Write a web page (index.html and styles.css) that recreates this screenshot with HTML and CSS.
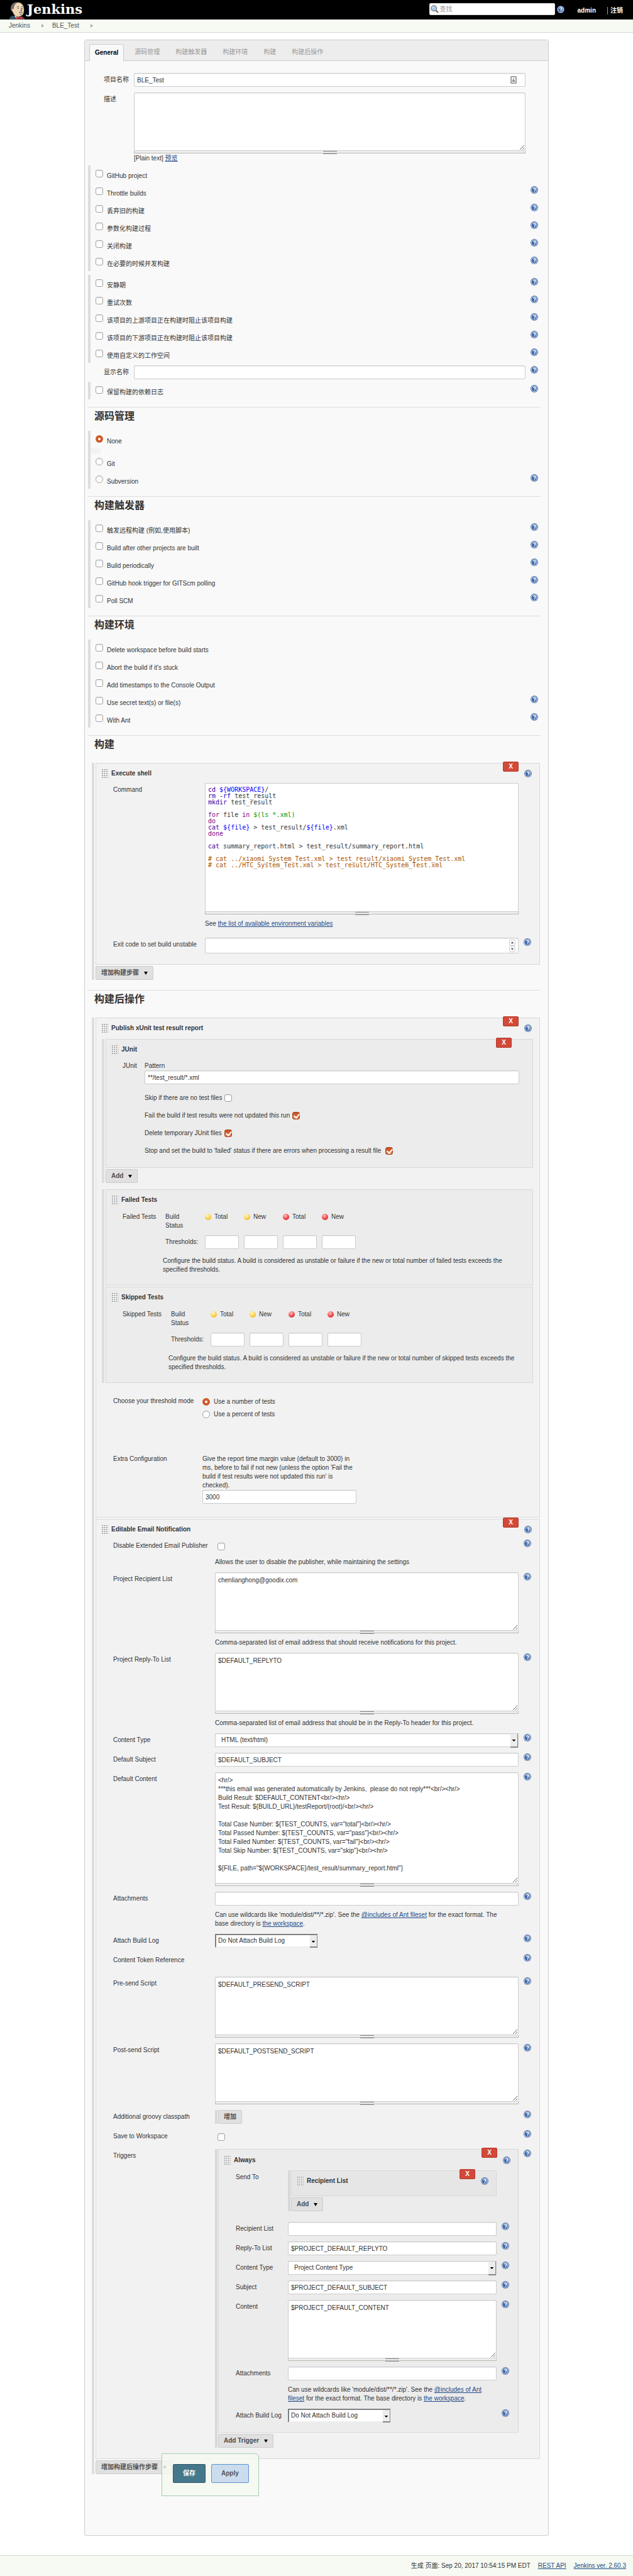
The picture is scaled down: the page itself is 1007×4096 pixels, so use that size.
FILE: index.html
```html
<!DOCTYPE html>
<html lang="zh-CN">
<head>
<meta charset="utf-8">
<title>BLE_Test Config [Jenkins]</title>
<link rel="stylesheet" href="styles.css">
</head>
<body>
<svg class="sprite" aria-hidden="true">
  <symbol id="help" viewBox="0 0 16 16">
    <circle cx="8" cy="8" r="7.9" fill="#3a5f9e"/>
    <circle cx="8" cy="8" r="6.9" fill="#f4f7fb"/>
    <circle cx="8" cy="8" r="5.9" fill="#3c65a6"/>
    <path d="M8 2.1a5.9 5.9 0 0 1 3.5 10.6L8 8z" fill="#6f93c6"/>
    <path d="M5.8 6.4c0-1.5 1-2.3 2.3-2.3s2.3.8 2.3 2c0 1.5-2 1.700-2 3.200" fill="none" stroke="#fff" stroke-width="1.700"/>
    <rect x="7.400" y="10.300" width="1.900" height="1.800" fill="#fff"/>
  </symbol>
</svg>

<header class="header">
  <a class="logo" href="#">
    <svg width="26" height="28" viewBox="0 0 100 108" aria-hidden="true">
      <path d="M2 108 Q4 88 30 84 L72 88 Q96 92 98 108Z" fill="#335061"/>
      <path d="M14 30 Q22 2 54 2 Q90 4 93 42 Q96 70 82 82 Q66 96 46 88 Q28 82 24 62 Q10 56 14 30Z" fill="#f0d6b7" stroke="#222" stroke-width="2"/>
      <path d="M12 44 Q10 20 28 9 Q44 0 58 4 Q36 10 32 30 L30 46 Q26 38 20 44 L22 58 Q12 54 12 44Z" fill="#6d6b6d"/>
      <path d="M36 84 L48 108 L62 92Z" fill="#fff"/>
      <path d="M46 90 L64 95 L84 90 L84 108 L66 104 L48 108Z" fill="#d33833" stroke="#7a1512" stroke-width="2"/>
      <path d="M50 32q6-6 12-2M76 30q5-4 9 1M74 40q8 10 4 15l-8-1M62 66q8-6 12-1 7-4 12 1M66 75q8 4 14-1" fill="none" stroke="#222" stroke-width="3"/>
      <circle cx="57" cy="40" r="3" fill="#222"/><circle cx="81" cy="40" r="3" fill="#222"/>
    </svg>
    <span class="logo-name">Jenkins</span>
  </a>
  <form class="search">
    <svg width="13" height="13" viewBox="0 0 16 16" aria-hidden="true">
      <path d="M10.500 10.500l4.300 4.300" stroke="#666" stroke-width="2.600"/>
      <circle cx="6.500" cy="6.500" r="5.300" fill="#a9c8ea" stroke="#777" stroke-width="1.500"/>
      <path d="M3.500 6a3 3 0 0 1 3-3" stroke="#fff" fill="none"/>
    </svg>
    <input type="search" placeholder="查找" aria-label="查找">
  </form>
  <a class="help" href="#" aria-label="Help"><svg><use href="#help"/></svg></a>
  <a class="user" href="#">admin</a>
  <a class="logout" href="#">注销</a>
</header>
<nav class="crumbs">
  <a href="#">Jenkins</a><i></i><a href="#">BLE_Test</a><i></i>
</nav>

<main class="config">
  <nav class="tabs">
    <a class="active" href="#general">General</a>
    <a href="#scm">源码管理</a>
    <a href="#triggers">构建触发器</a>
    <a href="#env">构建环境</a>
    <a href="#build">构建</a>
    <a href="#post">构建后操作</a>
  </nav>
  <form class="body">
    <div class="field" id="general">
      <label for="name">项目名称</label>
      <div class="control with-icon">
        <input type="text" id="name" value="BLE_Test">
        <svg width="10" height="12" viewBox="0 0 12 15" aria-hidden="true"><rect x="1" y="1" width="10" height="13" rx="1" fill="#fff" stroke="#888" stroke-width="2"/><path d="M6 3.500v4M3.500 8.500h5M3.500 10.500h5" stroke="#777" stroke-width="1.500"/></svg>
      </div>
    </div>
    <div class="field">
      <label for="desc">描述</label>
      <div class="control"><textarea id="desc"></textarea><div class="handle"></div><div class="note">[Plain text] <a href="#">预览</a></div></div>
    </div>

    <div class="group first">
      <div class="opt"><input type="checkbox" id="g1"><label for="g1">GitHub project</label></div>
      <div class="opt"><input type="checkbox" id="g2"><label for="g2">Throttle builds</label><a class="help" href="#" aria-label="Help"><svg><use href="#help"/></svg></a></div>
      <div class="opt"><input type="checkbox" id="g3"><label for="g3">丢弃旧的构建</label><a class="help" href="#" aria-label="Help"><svg><use href="#help"/></svg></a></div>
      <div class="opt"><input type="checkbox" id="g4"><label for="g4">参数化构建过程</label><a class="help" href="#" aria-label="Help"><svg><use href="#help"/></svg></a></div>
      <div class="opt"><input type="checkbox" id="g5"><label for="g5">关闭构建</label><a class="help" href="#" aria-label="Help"><svg><use href="#help"/></svg></a></div>
      <div class="opt"><input type="checkbox" id="g6"><label for="g6">在必要的时候并发构建</label><a class="help" href="#" aria-label="Help"><svg><use href="#help"/></svg></a></div>
    </div>
    <div class="group advanced">
      <div class="opt"><input type="checkbox" id="a1"><label for="a1">安静期</label><a class="help" href="#" aria-label="Help"><svg><use href="#help"/></svg></a></div>
      <div class="opt"><input type="checkbox" id="a2"><label for="a2">重试次数</label><a class="help" href="#" aria-label="Help"><svg><use href="#help"/></svg></a></div>
      <div class="opt"><input type="checkbox" id="a3"><label for="a3">该项目的上游项目正在构建时阻止该项目构建</label><a class="help" href="#" aria-label="Help"><svg><use href="#help"/></svg></a></div>
      <div class="opt"><input type="checkbox" id="a4"><label for="a4">该项目的下游项目正在构建时阻止该项目构建</label><a class="help" href="#" aria-label="Help"><svg><use href="#help"/></svg></a></div>
      <div class="opt"><input type="checkbox" id="a5"><label for="a5">使用自定义的工作空间</label><a class="help" href="#" aria-label="Help"><svg><use href="#help"/></svg></a></div>
    </div>
    <div class="field tight">
      <label for="display">显示名称</label>
      <div class="control"><input type="text" id="display"></div>
      <a class="help" href="#" aria-label="Help"><svg><use href="#help"/></svg></a>
    </div>
    <div class="group">
      <div class="opt"><input type="checkbox" id="k1"><label for="k1">保留构建的依赖日志</label><a class="help" href="#" aria-label="Help"><svg><use href="#help"/></svg></a></div>
    </div>

    <section id="scm">
      <h2>源码管理</h2>
      <div class="group">
        <div class="opt"><input type="radio" name="scm" id="s1" checked><label for="s1">None</label></div>
        <div class="opt-gap"></div>
        <div class="opt"><input type="radio" name="scm" id="s2"><label for="s2">Git</label></div>
        <div class="opt"><input type="radio" name="scm" id="s3"><label for="s3">Subversion</label><a class="help" href="#" aria-label="Help"><svg><use href="#help"/></svg></a></div>
      </div>
    </section>

    <section id="triggers">
      <h2>构建触发器</h2>
      <div class="group">
        <div class="opt"><input type="checkbox" id="t1"><label for="t1">触发远程构建 (例如,使用脚本)</label><a class="help" href="#" aria-label="Help"><svg><use href="#help"/></svg></a></div>
        <div class="opt"><input type="checkbox" id="t2"><label for="t2">Build after other projects are built</label><a class="help" href="#" aria-label="Help"><svg><use href="#help"/></svg></a></div>
        <div class="opt"><input type="checkbox" id="t3"><label for="t3">Build periodically</label><a class="help" href="#" aria-label="Help"><svg><use href="#help"/></svg></a></div>
        <div class="opt"><input type="checkbox" id="t4"><label for="t4">GitHub hook trigger for GITScm polling</label><a class="help" href="#" aria-label="Help"><svg><use href="#help"/></svg></a></div>
        <div class="opt"><input type="checkbox" id="t5"><label for="t5">Poll SCM</label><a class="help" href="#" aria-label="Help"><svg><use href="#help"/></svg></a></div>
      </div>
    </section>

    <section id="env">
      <h2>构建环境</h2>
      <div class="group">
        <div class="opt"><input type="checkbox" id="e1"><label for="e1">Delete workspace before build starts</label></div>
        <div class="opt"><input type="checkbox" id="e2"><label for="e2">Abort the build if it's stuck</label></div>
        <div class="opt"><input type="checkbox" id="e3"><label for="e3">Add timestamps to the Console Output</label></div>
        <div class="opt"><input type="checkbox" id="e4"><label for="e4">Use secret text(s) or file(s)</label><a class="help" href="#" aria-label="Help"><svg><use href="#help"/></svg></a></div>
        <div class="opt"><input type="checkbox" id="e5"><label for="e5">With Ant</label><a class="help" href="#" aria-label="Help"><svg><use href="#help"/></svg></a></div>
      </div>
    </section>

    <section id="build">
      <h2>构建</h2>
      <div class="repeat top">
        <div class="block build">
          <button type="button" class="delete">X</button>
          <div class="head"><span class="grip"></span><h3>Execute shell</h3><a class="help" href="#" aria-label="Help"><svg><use href="#help"/></svg></a></div>
          <div class="field">
            <span class="label" id="cmd">Command</span>
            <div class="control">
<pre class="code" role="textbox" aria-labelledby="cmd" tabindex="0"><b class="cmd">cd</b> <b class="var">${WORKSPACE}</b>/
<b class="cmd">rm</b> <b class="attr">-rf</b> test_result
<b class="cmd">mkdir</b> test_result

<b class="key">for</b> file <b class="key">in</b> <b class="sub">$(ls *.xml)</b>
<b class="key">do</b>
<b class="cmd">cat</b> <b class="var">${file}</b> &gt; test_result/<b class="var">${file}</b>.xml
<b class="key">done</b>

<b class="cmd">cat</b> summary_report.html &gt; test_result/summary_report.html

<b class="com"># cat ../xiaomi_System_Test.xml &gt; test_result/xiaomi_System_Test.xml</b>
<b class="com"># cat ../HTC_System_Test.xml &gt; test_result/HTC_System_Test.xml</b></pre>
              <div class="handle"></div>
              <p class="desc">See <a href="#">the list of available environment variables</a></p>
            </div>
          </div>
          <div class="field exit">
            <label for="exit">Exit code to set build unstable</label>
            <div class="control with-icon">
              <input type="text" id="exit" inputmode="numeric">
              <svg width="10" height="20" viewBox="0 0 10 20" aria-hidden="true"><rect x=".5" y=".5" width="9" height="9" rx="2" fill="#fafafa" stroke="#ccc"/><rect x=".5" y="10.500" width="9" height="9" rx="2" fill="#fafafa" stroke="#ccc"/><path d="M3 6l2-2.500L7 6zM3 14l2 2.500L7 14z" fill="#333"/></svg>
            </div>
            <a class="help" href="#" aria-label="Help"><svg><use href="#help"/></svg></a>
          </div>
        </div>
        <button type="button" class="btn menu">增加构建步骤</button>
      </div>
    </section>

    <section id="post" class="after-blocks">
      <h2>构建后操作</h2>
      <div class="repeat top">
        <div class="block xunit">
          <button type="button" class="delete">X</button>
          <div class="head"><span class="grip"></span><h3>Publish xUnit test result report</h3><a class="help" href="#" aria-label="Help"><svg><use href="#help"/></svg></a></div>
          <div class="repeat inner">
            <div class="block junit">
              <button type="button" class="delete">X</button>
              <div class="head"><span class="grip"></span><h3>JUnit</h3></div>
              <div class="junit-body">
                <span>JUnit</span>
                <div>
                  <label for="pattern">Pattern</label>
                  <input type="text" id="pattern" value="**/test_result/*.xml">
                  <div class="check"><label for="j1">Skip if there are no test files</label><input type="checkbox" id="j1"></div>
                  <div class="check"><label for="j2">Fail the build if test results were not updated this run</label><input type="checkbox" id="j2" checked></div>
                  <div class="check"><label for="j3">Delete temporary JUnit files</label><input type="checkbox" id="j3" checked></div>
                  <div class="check wide"><label for="j4">Stop and set the build to 'failed' status if there are errors when processing a result file</label><input type="checkbox" id="j4" checked></div>
                </div>
              </div>
            </div>
            <button type="button" class="btn menu">Add</button>
          </div>
          <div class="repeat inner">
            <div class="block">
              <div class="head"><span class="grip"></span><h3>Failed Tests</h3></div>
              <div class="limits">
                <span>Failed Tests</span><span class="narrow">Build Status</span>
                <span class="ball yellow">Total</span><span class="ball yellow">New</span><span class="ball red">Total</span><span class="ball red">New</span>
                <span></span><span class="mid">Thresholds:</span>
                <input type="text" aria-label="Unstable total"><input type="text" aria-label="Unstable new"><input type="text" aria-label="Failed total"><input type="text" aria-label="Failed new">
                <p>Configure the build status. A build is considered as unstable or failure if the new or total number of failed tests exceeds the specified thresholds.</p>
              </div>
            </div>
            <div class="block">
              <div class="head"><span class="grip"></span><h3>Skipped Tests</h3></div>
              <div class="limits skipped">
                <span>Skipped Tests</span><span class="narrow">Build Status</span>
                <span class="ball yellow">Total</span><span class="ball yellow">New</span><span class="ball red">Total</span><span class="ball red">New</span>
                <span></span><span class="mid">Thresholds:</span>
                <input type="text" aria-label="Unstable total"><input type="text" aria-label="Unstable new"><input type="text" aria-label="Failed total"><input type="text" aria-label="Failed new">
                <p>Configure the build status. A build is considered as unstable or failure if the new or total number of skipped tests exceeds the specified thresholds.</p>
              </div>
            </div>
          </div>
          <div class="field mode">
            <span class="label">Choose your threshold mode</span>
            <div class="control radios">
              <div><input type="radio" name="mode" id="m1" checked><label for="m1">Use a number of tests</label></div>
              <div><input type="radio" name="mode" id="m2"><label for="m2">Use a percent of tests</label></div>
            </div>
          </div>
          <div class="field">
            <span class="label">Extra Configuration</span>
            <div class="control margin-value">
              <label for="margin">Give the report time margin value (default to 3000) in ms, before to fail if not new (unless the option 'Fail the build if test results were not updated this run' is checked).</label>
              <input type="text" id="margin" value="3000">
            </div>
          </div>
        </div>

        <div class="block email">
          <button type="button" class="delete">X</button>
          <div class="head"><span class="grip"></span><h3>Editable Email Notification</h3><a class="help" href="#" aria-label="Help"><svg><use href="#help"/></svg></a></div>
          <div class="field">
            <label for="m-dis">Disable Extended Email Publisher</label>
            <div class="control"><div class="tick"><input type="checkbox" id="m-dis"></div><p class="desc">Allows the user to disable the publisher, while maintaining the settings</p></div>
            <a class="help" href="#" aria-label="Help"><svg><use href="#help"/></svg></a>
          </div>
          <div class="field">
            <label for="m-rec">Project Recipient List</label>
            <div class="control"><textarea id="m-rec">chenlianghong@goodix.com</textarea><div class="handle"></div><p class="desc">Comma-separated list of email address that should receive notifications for this project.</p></div>
            <a class="help" href="#" aria-label="Help"><svg><use href="#help"/></svg></a>
          </div>
          <div class="field">
            <label for="m-rep">Project Reply-To List</label>
            <div class="control"><textarea id="m-rep">$DEFAULT_REPLYTO</textarea><div class="handle"></div><p class="desc">Comma-separated list of email address that should be in the Reply-To header for this project.</p></div>
            <a class="help" href="#" aria-label="Help"><svg><use href="#help"/></svg></a>
          </div>
          <div class="field">
            <label for="m-type">Content Type</label>
            <div class="control"><div class="select"><select id="m-type"><option>HTML (text/html)</option></select></div></div>
            <a class="help" href="#" aria-label="Help"><svg><use href="#help"/></svg></a>
          </div>
          <div class="field">
            <label for="m-sub">Default Subject</label>
            <div class="control"><input type="text" id="m-sub" value="$DEFAULT_SUBJECT"></div>
            <a class="help" href="#" aria-label="Help"><svg><use href="#help"/></svg></a>
          </div>
          <div class="field">
            <label for="m-con">Default Content</label>
            <div class="control"><textarea id="m-con" class="tall">&lt;hr/&gt;
***this email was generated automatically by Jenkins,  please do not reply***&lt;br/&gt;&lt;hr/&gt;
Build Result: $DEFAULT_CONTENT&lt;br/&gt;&lt;hr/&gt;
Test Result: ${BUILD_URL}/testReport/(root)/&lt;br/&gt;&lt;hr/&gt;

Total Case Number: ${TEST_COUNTS, var="total"}&lt;br/&gt;&lt;hr/&gt;
Total Passed Number: ${TEST_COUNTS, var="pass"}&lt;br/&gt;&lt;hr/&gt;
Total Failed Number: ${TEST_COUNTS, var="fail"}&lt;br/&gt;&lt;hr/&gt;
Total Skip Number: ${TEST_COUNTS, var="skip"}&lt;br/&gt;&lt;hr/&gt;

${FILE, path="${WORKSPACE}/test_result/summary_report.html"}</textarea><div class="handle"></div></div>
            <a class="help" href="#" aria-label="Help"><svg><use href="#help"/></svg></a>
          </div>
          <div class="field">
            <label for="m-att">Attachments</label>
            <div class="control"><input type="text" id="m-att"><p class="desc">Can use wildcards like 'module/dist/**/*.zip'. See the <a href="#">@includes of Ant fileset</a> for the exact format. The base directory is <a href="#">the workspace</a>.</p></div>
            <a class="help" href="#" aria-label="Help"><svg><use href="#help"/></svg></a>
          </div>
          <div class="field">
            <label for="m-log">Attach Build Log</label>
            <div class="control"><div class="select inset"><select id="m-log"><option>Do Not Attach Build Log</option></select></div></div>
            <a class="help" href="#" aria-label="Help"><svg><use href="#help"/></svg></a>
          </div>
          <div class="field token">
            <span class="label">Content Token Reference</span>
            <div class="control"></div>
            <a class="help" href="#" aria-label="Help"><svg><use href="#help"/></svg></a>
          </div>
          <div class="field">
            <label for="m-pre">Pre-send Script</label>
            <div class="control"><textarea id="m-pre">$DEFAULT_PRESEND_SCRIPT</textarea><div class="handle"></div></div>
            <a class="help" href="#" aria-label="Help"><svg><use href="#help"/></svg></a>
          </div>
          <div class="field">
            <label for="m-post">Post-send Script</label>
            <div class="control"><textarea id="m-post">$DEFAULT_POSTSEND_SCRIPT</textarea><div class="handle"></div></div>
            <a class="help" href="#" aria-label="Help"><svg><use href="#help"/></svg></a>
          </div>
          <div class="field">
            <span class="label">Additional groovy classpath</span>
            <div class="control"><div class="repeat nested"><button type="button" class="btn">增加</button></div></div>
            <a class="help" href="#" aria-label="Help"><svg><use href="#help"/></svg></a>
          </div>
          <div class="field">
            <label for="m-save">Save to Workspace</label>
            <div class="control"><div class="tick"><input type="checkbox" id="m-save"></div></div>
            <a class="help" href="#" aria-label="Help"><svg><use href="#help"/></svg></a>
          </div>
          <div class="field">
            <span class="label">Triggers</span>
            <div class="control">
              <div class="repeat nested">
                <div class="block always">
                  <button type="button" class="delete">X</button>
                  <div class="head"><span class="grip"></span><h3>Always</h3><a class="help" href="#" aria-label="Help"><svg><use href="#help"/></svg></a></div>
                  <div class="field">
                    <span class="label">Send To</span>
                    <div class="control">
                      <div class="repeat nested">
                        <div class="block recipient">
                          <button type="button" class="delete">X</button>
                          <div class="head"><span class="grip"></span><h3>Recipient List</h3><a class="help" href="#" aria-label="Help"><svg><use href="#help"/></svg></a></div>
                        </div>
                        <button type="button" class="btn menu">Add</button>
                      </div>
                    </div>
                  </div>
                  <div class="field after-send">
                    <label for="r-rec">Recipient List</label>
                    <div class="control"><input type="text" id="r-rec"></div>
                    <a class="help" href="#" aria-label="Help"><svg><use href="#help"/></svg></a>
                  </div>
                  <div class="field">
                    <label for="r-rep">Reply-To List</label>
                    <div class="control"><input type="text" id="r-rep" value="$PROJECT_DEFAULT_REPLYTO"></div>
                    <a class="help" href="#" aria-label="Help"><svg><use href="#help"/></svg></a>
                  </div>
                  <div class="field">
                    <label for="r-type">Content Type</label>
                    <div class="control"><div class="select"><select id="r-type"><option>Project Content Type</option></select></div></div>
                    <a class="help" href="#" aria-label="Help"><svg><use href="#help"/></svg></a>
                  </div>
                  <div class="field">
                    <label for="r-sub">Subject</label>
                    <div class="control"><input type="text" id="r-sub" value="$PROJECT_DEFAULT_SUBJECT"></div>
                    <a class="help" href="#" aria-label="Help"><svg><use href="#help"/></svg></a>
                  </div>
                  <div class="field">
                    <label for="r-con">Content</label>
                    <div class="control"><textarea id="r-con">$PROJECT_DEFAULT_CONTENT</textarea><div class="handle"></div></div>
                    <a class="help" href="#" aria-label="Help"><svg><use href="#help"/></svg></a>
                  </div>
                  <div class="field">
                    <label for="r-att">Attachments</label>
                    <div class="control"><input type="text" id="r-att"><p class="desc">Can use wildcards like 'module/dist/**/*.zip'. See the <a href="#">@includes of Ant fileset</a> for the exact format. The base directory is <a href="#">the workspace</a>.</p></div>
                    <a class="help" href="#" aria-label="Help"><svg><use href="#help"/></svg></a>
                  </div>
                  <div class="field">
                    <label for="r-log">Attach Build Log</label>
                    <div class="control"><div class="select inset"><select id="r-log"><option>Do Not Attach Build Log</option></select></div></div>
                    <a class="help" href="#" aria-label="Help"><svg><use href="#help"/></svg></a>
                  </div>
                </div>
                <button type="button" class="btn menu">Add Trigger</button>
              </div>
            </div>
            <a class="help" href="#" aria-label="Help"><svg><use href="#help"/></svg></a>
          </div>
        </div>
        <button type="button" class="btn menu">增加构建后操作步骤</button>
      </div>
    </section>

    <div class="actions">
      <button type="submit" class="save">保存</button>
      <button type="button" class="apply">Apply</button>
    </div>
  </form>
</main>

<footer class="footer">
  <span>生成 页面: Sep 20, 2017 10:54:15 PM EDT</span>
  <a href="#">REST API</a>
  <a href="#">Jenkins ver. 2.60.3</a>
</footer>
</body>
</html>
```
FILE: styles.css
```css
* { box-sizing: border-box; }
body {
  margin: 0;
  min-height: 100vh;
  display: flex;
  flex-direction: column;
  background: #fff;
  color: #333;
  font: 10px/14px "Liberation Sans", "Noto Sans CJK SC", sans-serif;
}
a { color: #204a87; }
h2, h3, p, pre { margin: 0; }
button, input, select, textarea { font: inherit; color: inherit; }
.sprite { position: absolute; width: 0; height: 0; }
.help { display: block; flex: none; width: 12px; height: 12px; }
.help svg { display: block; width: 12px; height: 12px; }

/* page header */
.header {
  display: flex;
  align-items: flex-start;
  height: 31px;
  padding: 0 16px 0 14px;
  background: #000;
}
.header a { color: #fff; text-decoration: none; font-weight: bold; }
.logo { display: flex; gap: 3px; margin-right: auto; }
.logo svg { margin-top: 3px; }
.logo-name { margin-top: 3px; font: bold 21px/24px "DejaVu Serif", serif; }
.search {
  display: flex;
  align-items: center;
  width: 200px;
  height: 19px;
  margin-top: 5px;
  padding-left: 2px;
  border-radius: 3px;
  background: #fff;
  box-shadow: inset 0 0 2px 1px #ddd;
}
.search input {
  flex: 1;
  min-width: 0;
  padding: 0 2px;
  border: 0;
  background: none;
  outline: 0;
}
.search input::placeholder { color: #999; }
.header .help { margin: 9px 21px 0 3px; }
.user { margin-top: 10px; }
.logout {
  margin: 11px 0 0 18px;
  padding-left: 4px;
  border-left: 1px solid #7aa;
  line-height: 12px;
}
.crumbs {
  display: flex;
  align-items: center;
  height: 21px;
  padding-left: 14px;
  border-bottom: 1px solid #d3d7cf;
  background: #f6faf2;
}
.crumbs a { color: #4d545d; text-decoration: none; }
.crumbs i {
  margin: 0 13px 0 18px;
  border: 3px solid transparent;
  border-left: 4px solid #aaa;
  border-right: 0;
}

/* configuration panel */
.config {
  margin: 11px 134px 30px;
  border: 1px solid #ccc;
  border-radius: 3px;
  background: #f9f9f9;
}
.tabs {
  display: flex;
  align-items: flex-end;
  gap: 2px;
  height: 33px;
  padding-left: 7px;
  border-bottom: 1px solid #ccc;
  background: #ededed;
}
.tabs a {
  height: 27px;
  margin-bottom: -1px;
  padding: 6px 11px 0 12px;
  color: #999;
  text-decoration: none;
}
.tabs a.active {
  padding: 6px 8px 0;
  margin-right: 3px;
  border: 1px solid #ccc;
  border-bottom: 0;
  border-radius: 4px 4px 0 0;
  background: #f9f9f9;
  color: #000;
  font-weight: bold;
}
.body { padding: 19px 12px 62px 4px; }

/* label / control / help rows */
.field {
  display: grid;
  grid-template-columns: 74px 1fr 24px;
  align-items: start;
}
.field + .field { margin-top: 9px; }
.field > label, .field > .label { padding: 4px 0 0 26px; }
.field > .help { margin: 1px 0 0 8px; }
.field.tight { margin: 4px 0; }
.control { min-width: 0; }
input[type="text"], textarea, select {
  display: block;
  width: 100%;
  height: 22px;
  padding: 0 4px;
  border: 1px solid #ccc;
  border-radius: 2px;
  background: #fff;
  box-shadow: inset 0 1px 1px #eee;
}
textarea {
  height: 93px;
  padding: 5px 4px;
  resize: both;
  overflow: hidden;
}
textarea.tall { height: 177px; }
.handle {
  display: flex;
  justify-content: center;
  height: 4px;
  border: 1px solid #bab9b2;
  border-top: 0;
  background: #eee;
}
.handle::after {
  content: "";
  width: 22px;
  height: 3px;
  border: solid #888;
  border-width: 1px 0;
}
.note { margin-top: 1px; }
.desc { margin-top: 8px; padding-right: 14px; }
.with-icon { position: relative; }
.with-icon svg { position: absolute; right: 14px; top: 5px; }

input[type="checkbox"], input[type="radio"] {
  appearance: none;
  flex: none;
  display: block;
  width: 12px;
  height: 12px;
  margin: 0;
  border: 1px solid #a2a2a2;
  border-radius: 3px;
  background: linear-gradient(#f0f0f0, #fff 40%);
}
input[type="radio"] { border-radius: 50%; }
input[type="radio"]:checked {
  border: 4px solid #d05a28;
  background: #fff;
}
input[type="checkbox"]:checked {
  border-color: #a5431c;
  background: linear-gradient(#c9501f, #e07a4d);
}
input[type="checkbox"]:checked::after {
  content: "";
  display: block;
  width: 4px;
  height: 7px;
  margin: 0 0 0 3px;
  border: solid #fff;
  border-width: 0 2px 2px 0;
  transform: rotate(40deg);
}

/* groups of options with a bar on the left */
.group { margin-left: 1px; border-left: 4px solid #ddd; }
.group.first { margin-top: 4px; }
.group.advanced { margin-top: 6px; }
.opt {
  display: flex;
  align-items: flex-start;
  height: 28px;
  padding: 0 4px 0 8px;
}
.opt input { margin-top: 7px; }
.opt label { margin: 10px 0 0 6px; }
.opt .help { margin: 5px 0 0 auto; }
.opt-gap { width: 16px; height: 8px; background: #f2f2f2; }

section {
  margin-top: 12px;
  padding-top: 4px;
  border-top: 1px solid #ddd;
}
section.after-blocks { margin-top: 16px; }
h2 {
  padding: 0 0 13px 11px;
  font-size: 16px;
  line-height: 20px;
}
h3 { margin: 0 auto 0 5px; font-size: 10px; line-height: 14px; }

/* repeatable blocks */
.repeat { border-left: 4px solid #ddd; padding-left: 2px; }
.repeat.top { margin: 6px 1px 0 7px; }
.repeat.inner { margin: 10px 10px 0 9px; }
.repeat.nested { padding-left: 1px; border-color: #d8d8d8; }
.block {
  position: relative;
  border: 1px solid #d8d8d8;
  background: #f2f2f2;
}
.block .block { background: #ececec; }
.block .block .block { background: #e6e6e6; }
.block + .block, .block + .btn { margin-top: 2px; }
.head { display: flex; align-items: center; height: 14px; margin: 9px 12px 8px 9px; }
.always > .head { margin: 10px 12px 9px 9px; }
.grip {
  width: 10px;
  height: 14px;
  background: radial-gradient(circle at 1px 1px, #aaa 1px, #fff 1px) 0 0 / 3px 3px;
}
.delete {
  position: absolute;
  right: 33px;
  top: -3px;
  width: 25px;
  height: 16px;
  padding: 0;
  border: 1px solid #b73b2b;
  border-radius: 2px;
  background: #d24939;
  color: #fff;
  font-weight: bold;
}
.block .field { grid-template-columns: 173px 1fr 33px; }
.block .field > label, .block .field > .label { padding-left: 27px; }
.block.xunit > .field { grid-template-columns: 169px 1fr 33px; }
.block.email > .field { grid-template-columns: 189px 1fr 33px; }
.block.always > .field { grid-template-columns: 110px 1fr 34px; }
.block.build { padding-bottom: 17px; }
.block.xunit { padding-bottom: 21px; }
.block.email { padding-bottom: 17px; }
.block.always { padding-bottom: 15px; }
.block.always .field.after-send { margin-top: 17px; }
.block.recipient { padding-bottom: 8px; }
.field.exit { margin-top: 15px; }
.field.exit input { height: 25px; }
.field.exit svg { top: 3px; right: 5px; }
.field.exit .help svg { position: static; }
.field.mode { height: 83px; margin-top: 18px; }
.field.token { height: 28px; }
.tick { height: 22px; padding: 6px 0 0 4px; }
.code {
  height: 205px;
  padding: 5px 4px;
  border: 1px solid #ccc;
  background: #fff;
  font: 10px/10px "DejaVu Sans Mono", "Liberation Mono", monospace;
  overflow: hidden;
}
.code b { font-weight: normal; }
.cmd { color: #30a; }
.attr { color: #00c; }
.var { color: #00f; }
.key { color: #708; }
.sub { color: #090; }
.com { color: #a50; }

.junit-body {
  display: grid;
  grid-template-columns: 35px 1fr;
  margin: 12px 21px 12px 26px;
}
.junit-body > div > label { display: block; }
.junit-body input[type="text"] { margin-bottom: 8px; }
.check { display: flex; align-items: center; gap: 4px; height: 28px; }
.check.wide { gap: 7px; }
.limits {
  display: grid;
  grid-template-columns: 68px 63px repeat(4, 62px);
  margin: 13px 21px 17px 26px;
  row-gap: 8px;
}
.limits.skipped { grid-template-columns: 77px 63px repeat(4, 62px); }
.limits input { width: 54px; }
.limits p { grid-column: 1 / -1; margin: 4px 0 0 64px; width: 566px; }
.limits.skipped p { margin-left: 73px; width: 558px; }
.narrow { width: 40px; }
.mid { align-self: center; }
.ball::before {
  content: "";
  display: inline-block;
  width: 10px;
  height: 10px;
  margin: 0 5px 0 0;
  border-radius: 50%;
  vertical-align: middle;
}
.yellow::before { background: radial-gradient(circle at 40% 30%, #fffbd0, #fbc93a 60%, #d99a1e); }
.red::before { background: radial-gradient(circle at 40% 30%, #ffc0c0, #ec3c3c 60%, #b81f1f); }
.radios { display: grid; gap: 6px; padding-top: 5px; }
.radios div { display: flex; align-items: center; gap: 6px; height: 14px; }
.margin-value { width: 245px; padding-top: 4px; }
.margin-value label { display: block; }

.select { position: relative; }
.select select { appearance: none; padding: 0 9px; border-radius: 0; }
.select::after {
  content: "";
  position: absolute;
  right: 1px;
  top: 1px;
  width: 11px;
  height: 20px;
  border: solid #888;
  border-width: 0 1px 2px 0;
  background: linear-gradient(#000, #000) 3px 9px / 5px 1px no-repeat, linear-gradient(#000, #000) 4px 10px / 3px 1px no-repeat, linear-gradient(#000, #000) 5px 11px / 1px 1px no-repeat, #ececec;
}
.select.inset { width: 164px; }
.select.inset select {
  padding: 0 3px;
  border: 2px solid #eee;
  border-top-color: #808080;
  border-left-color: #808080;
  box-shadow: none;
}
.select.inset::after { top: 2px; height: 18px; }

.btn {
  display: block;
  height: 22px;
  padding: 0 8px;
  border: 1px solid #ccc;
  border-radius: 2px;
  background: #e0e0e0;
  color: #4d4d4d;
  font-weight: bold;
}
.btn.menu::after {
  content: "";
  display: inline-block;
  margin-left: 8px;
  border: 3px solid transparent;
  border-top: 5px solid #000;
  border-bottom: 0;
}
.actions {
  position: relative;
  display: flex;
  gap: 9px;
  align-items: flex-start;
  width: 155px;
  height: 68px;
  margin: -33px 0 0 118px;
  padding: 16px 15px 0 17px;
  border: 1px solid #a5cdb2;
  border-radius: 0 6px 0 0;
  background: rgba(244, 249, 240, 0.85);
}
.actions button {
  height: 30px;
  padding: 0 15px;
  border: 1px solid #305566;
  border-radius: 2px;
  background: #45788b;
  color: #fff;
  font-weight: bold;
}
.actions .apply { border-color: #5c93cf; background: #cbdcec; color: #4d545d; }

.footer {
  display: flex;
  justify-content: flex-end;
  align-items: center;
  gap: 12px;
  height: 33px;
  margin-top: auto;
  padding-right: 11px;
  border-top: 1px solid #d3d7cf;
  background: #f6faf2;
}
```
